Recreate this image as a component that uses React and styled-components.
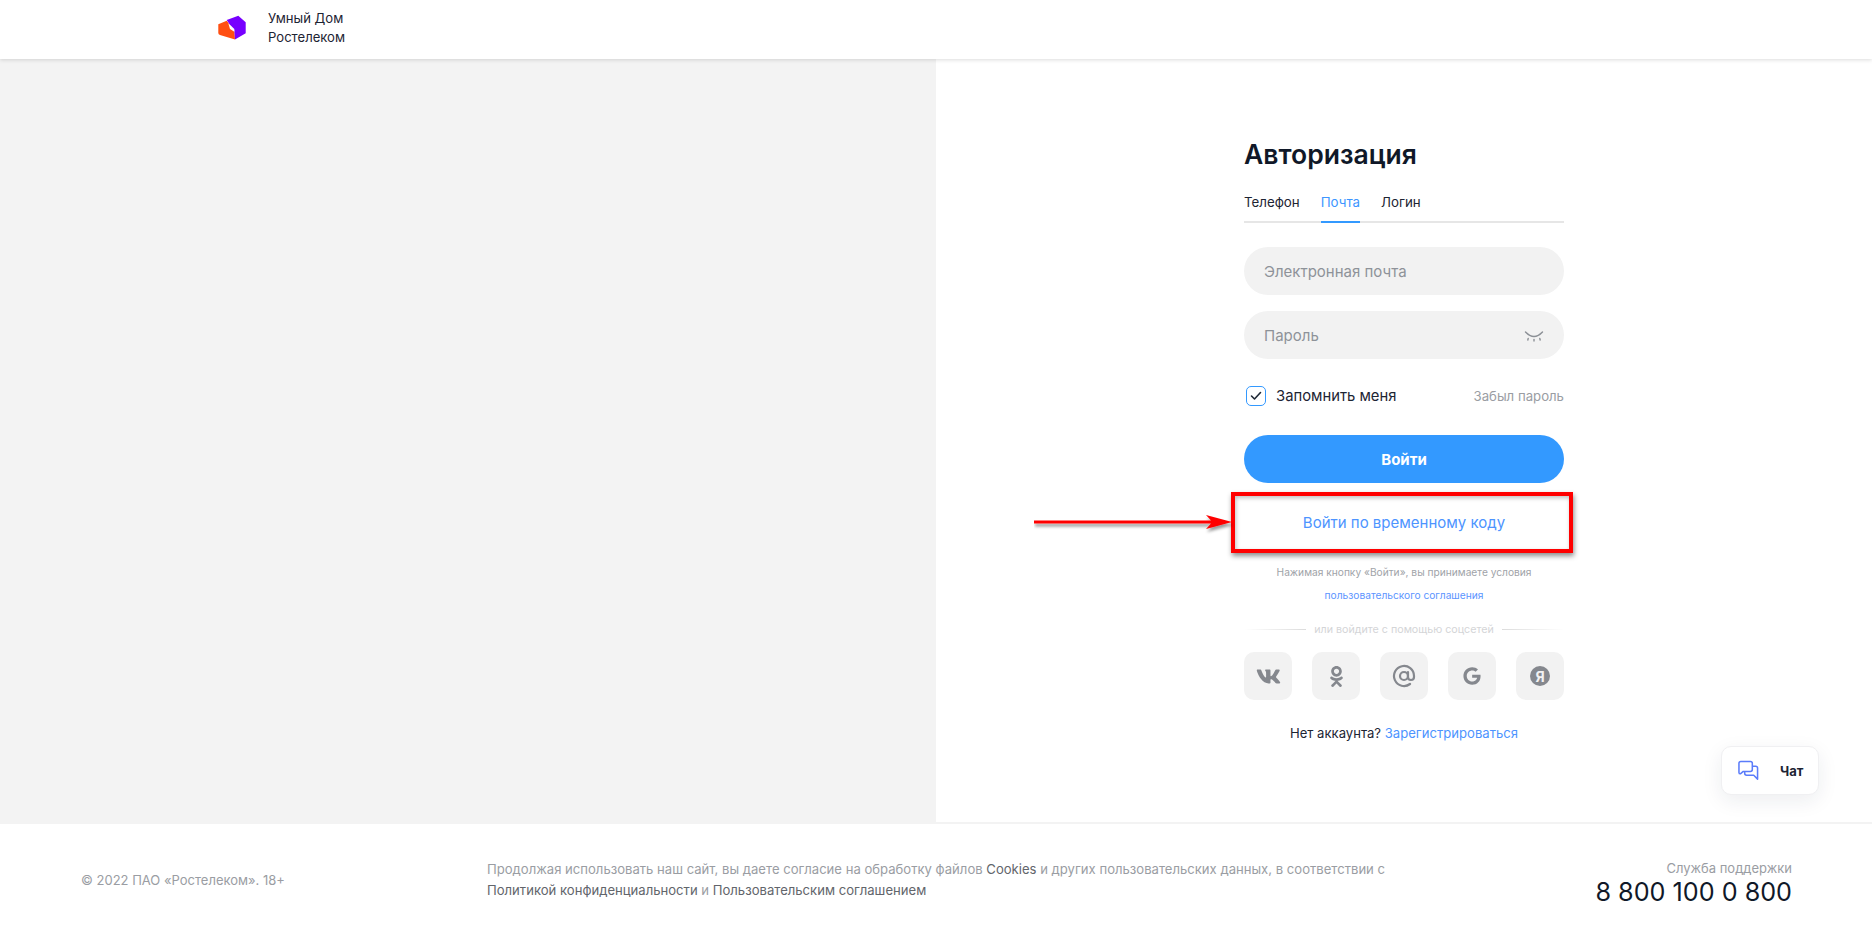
import React from "react";
import styled, { createGlobalStyle } from "styled-components";
import { FaVk, FaOdnoklassniki, FaGoogle } from "react-icons/fa";
import { AtSign } from "lucide-react";

const GlobalStyle = createGlobalStyle`
  html, body { margin: 0; padding: 0; background: #fff; }
  * { box-sizing: border-box; }
  body { font-family: Inter, "Noto Sans", sans-serif; color: #101828; }
`;

const Logo = () => (
  <svg width="28" height="26" viewBox="0 0 28 26">
    <path d="M0.3 9.3 L8.7 5.7 L16.3 15 L17 24.6 L2 20 Q0.3 19.5 0.3 18 Z" fill="#ff4f12" />
    <path d="M8.7 5 L20.3 0.7 L27.7 7.3 V18.3 L17 24.6 L16.3 15 L12 10 Z" fill="#7700ff" />
    <path d="M10.3 8.3 L16.3 14 V16.7 L12 14 Z" fill="#fff" />
  </svg>
);

const EyeClosed = () => (
  <svg width="20" height="14" viewBox="0 0 20 14" fill="none" stroke="#8c9096" strokeWidth="1.4" strokeLinecap="round">
    <path d="M1.5 4 Q10 13 18.5 4" />
    <path d="M4.2 10.5 L3.8 12" />
    <path d="M10 11.5 V13" />
    <path d="M15.8 10.5 L16.2 12" />
  </svg>
);

const Check = () => (
  <svg width="12" height="10" viewBox="0 0 12 10" fill="none" stroke="#1f2937" strokeWidth="1.6" strokeLinecap="round" strokeLinejoin="round">
    <path d="M1.5 5 L4.5 8 L10.5 1.5" />
  </svg>
);

const ChatIcon = () => (
  <svg width="21" height="21" viewBox="0 0 22 22" fill="none" stroke="#5b7cfa" strokeWidth="1.6" strokeLinejoin="round">
    <path d="M3 1.5 H13 Q15 1.5 15 3.5 V10 Q15 12 13 12 H5.5 L2.5 14.5 Q1 14.5 1 13 V3.5 Q1 1.5 3 1.5 Z" />
    <path d="M7 12 V14 Q7 16 9 16 H16.5 L20.5 20 V8.5 Q20.5 6.5 18.5 6.5 H15" />
  </svg>
);

const Arrow = () => (
  <svg width="204" height="28" viewBox="0 0 204 28">
    <defs>
      <filter id="arrowShadow" x="-5%" y="-50%" width="110%" height="220%">
        <feDropShadow dx="1" dy="3" stdDeviation="1.6" floodColor="#000" floodOpacity="0.4" />
      </filter>
    </defs>
    <path d="M0 10.5 H177 L172 5 L198 12 L172 19 L177 13.5 H0 Z" fill="#ff0000" filter="url(#arrowShadow)" />
  </svg>
);

export default function App() {
  return (
    <>
      <GlobalStyle />
      <Page>
        <Header>
          <Brand>
            <Logo />
            <BrandName>
              Умный Дом
              <br />
              Ростелеком
            </BrandName>
          </Brand>
        </Header>
        <Main>
          <LeftPanel />
          <RightPanel>
            <Form>
              <Title>Авторизация</Title>
              <Tabs>
                <Tab>Телефон</Tab>
                <Tab $active>Почта</Tab>
                <Tab>Логин</Tab>
              </Tabs>
              <Fields>
                <Field>
                  <FieldLabel>Электронная почта</FieldLabel>
                </Field>
                <Field>
                  <FieldLabel>Пароль</FieldLabel>
                  <EyeClosed />
                </Field>
              </Fields>
              <OptionsRow>
                <Remember>
                  <CheckBox>
                    <Check />
                  </CheckBox>
                  Запомнить меня
                </Remember>
                <Forgot>Забыл пароль</Forgot>
              </OptionsRow>
              <SubmitButton>Войти</SubmitButton>
              <CodeRow>
                <CodeLink>Войти по временному коду</CodeLink>
                <RedBox />
                <ArrowWrap>
                  <Arrow />
                </ArrowWrap>
              </CodeRow>
              <Terms>Нажимая кнопку «Войти», вы принимаете условия</Terms>
              <TermsLink>пользовательского соглашения</TermsLink>
              <Divider>
                <DividerLine $reverse />
                <span>или войдите с помощью соцсетей</span>
                <DividerLine />
              </Divider>
              <Socials>
                <SocialButton><FaVk size={25} /></SocialButton>
                <SocialButton><FaOdnoklassniki size={21} /></SocialButton>
                <SocialButton><AtSign size={24} strokeWidth={2.2} /></SocialButton>
                <SocialButton><FaGoogle size={18} /></SocialButton>
                <SocialButton><YandexMark>Я</YandexMark></SocialButton>
              </Socials>
              <Signup>
                Нет аккаунта? <a>Зарегистрироваться</a>
              </Signup>
            </Form>
          </RightPanel>
          <ChatWidget>
            <ChatIcon />
            <ChatLabel>Чат</ChatLabel>
          </ChatWidget>
        </Main>
        <Footer>
          <Copyright>© 2022 ПАО «Ростелеком». 18+</Copyright>
          <Legal>
            Продолжая использовать наш сайт, вы даете согласие на обработку файлов <b>Cookies</b> и других
            пользовательских данных, в соответствии с
            <br />
            <b>Политикой конфиденциальности</b> и <b>Пользовательским соглашением</b>
          </Legal>
          <Support>
            <SupportLabel>Служба поддержки</SupportLabel>
            <Phone>8 800 100 0 800</Phone>
          </Support>
        </Footer>
      </Page>
    </>
  );
}

const Page = styled.div`
  height: 936px;
  display: flex;
  flex-direction: column;
  overflow: hidden;
`;

const Header = styled.header`
  height: 59px;
  flex: none;
  background: #fff;
  box-shadow: 0 1px 4px rgba(0, 0, 0, 0.14);
  position: relative;
  z-index: 2;
  display: flex;
  align-items: center;
  padding: 0 0 4px 218px;
`;

const Brand = styled.div`
  display: flex;
  align-items: center;
  gap: 22px;
`;

const BrandName = styled.div`
  font-size: 13.1px;
  line-height: 18.5px;
  color: #1d2433;
`;

const Main = styled.main`
  flex: 1;
  display: flex;
  position: relative;
`;

const LeftPanel = styled.div`
  width: 936px;
  background: #f3f3f3;
`;

const RightPanel = styled.div`
  flex: 1;
  display: flex;
  justify-content: center;
`;

const Form = styled.div`
  width: 320px;
  padding-top: 77px;
  display: flex;
  flex-direction: column;
`;

const Title = styled.h1`
  margin: 0;
  font-size: 26.5px;
  line-height: 36px;
  font-weight: 600;
  color: #101828;
`;

const Tabs = styled.div`
  display: flex;
  gap: 21px;
  margin-top: 20px;
  height: 31px;
  border-bottom: 2px solid #e6e6e6;
`;

const Tab = styled.div`
  font-size: 13.3px;
  line-height: 20px;
  height: 31px;
  color: ${(p) => (p.$active ? "#3d96ff" : "#1d2433")};
  border-bottom: 2px solid ${(p) => (p.$active ? "#3399ff" : "transparent")};
`;

const Fields = styled.div`
  margin-top: 24px;
  display: flex;
  flex-direction: column;
  gap: 16px;
`;

const Field = styled.div`
  height: 48px;
  border-radius: 24px;
  background: #f2f2f2;
  padding: 0 20px;
  display: flex;
  align-items: center;
  justify-content: space-between;
`;

const FieldLabel = styled.span`
  font-size: 15px;
  color: #8e9299;
`;

const OptionsRow = styled.div`
  display: flex;
  align-items: center;
  justify-content: space-between;
  margin-top: 26px;
  height: 22px;
`;

const Remember = styled.div`
  display: flex;
  align-items: center;
  gap: 10px;
  font-size: 14.8px;
  color: #1d2433;
  padding-left: 2px;
`;

const CheckBox = styled.div`
  width: 20px;
  height: 20px;
  border: 1.5px solid #3399ff;
  border-radius: 5px;
  display: flex;
  align-items: center;
  justify-content: center;
`;

const Forgot = styled.div`
  font-size: 13.2px;
  color: #9a9da3;
`;

const SubmitButton = styled.button`
  margin-top: 28px;
  height: 48px;
  border: none;
  border-radius: 24px;
  background: #3399ff;
  color: #fff;
  font-family: inherit;
  font-size: 15px;
  font-weight: 700;
`;

const CodeRow = styled.div`
  position: relative;
  height: 61px;
  margin-top: 9px;
  display: flex;
  align-items: center;
  justify-content: center;
`;

const CodeLink = styled.a`
  font-size: 15px;
  color: #4d94ff;
`;

const RedBox = styled.div`
  position: absolute;
  left: -13px;
  right: -9px;
  top: 0;
  bottom: 0;
  border: 4px solid #ff0000;
  box-shadow: 1px 3px 5px rgba(0, 0, 0, 0.45), inset 1px 2px 4px rgba(0, 0, 0, 0.25);
`;

const ArrowWrap = styled.div`
  position: absolute;
  left: -210px;
  top: 18px;
  line-height: 0;
`;

const Terms = styled.div`
  margin-top: 11px;
  text-align: center;
  font-size: 10.2px;
  line-height: 16px;
  color: #a0a3a8;
`;

const TermsLink = styled.a`
  margin-top: 7px;
  text-align: center;
  font-size: 10.2px;
  line-height: 16px;
  color: #5b94ff;
`;

const Divider = styled.div`
  margin-top: 18px;
  height: 16px;
  display: flex;
  align-items: center;
  gap: 8px;
  font-size: 10.7px;
  color: #d4d5d7;
  white-space: nowrap;
`;

const DividerLine = styled.div`
  flex: 1;
  height: 1px;
  background: linear-gradient(
    ${(p) => (p.$reverse ? "to right" : "to left")},
    rgba(220, 220, 220, 0),
    #dcdcdc
  );
`;

const Socials = styled.div`
  margin-top: 15px;
  display: flex;
  justify-content: space-between;
`;

const SocialButton = styled.div`
  width: 48px;
  height: 48px;
  border-radius: 10px;
  background: #f2f2f2;
  color: #85888e;
  display: flex;
  align-items: center;
  justify-content: center;
`;

const YandexMark = styled.span`
  width: 20px;
  height: 20px;
  border-radius: 50%;
  background: #85888e;
  color: #f2f2f2;
  font-size: 14px;
  font-weight: 700;
  display: flex;
  align-items: center;
  justify-content: center;
`;

const Signup = styled.div`
  margin-top: 24px;
  text-align: center;
  font-size: 13.1px;
  line-height: 18px;
  color: #1d2433;
  a {
    color: #4d94ff;
  }
`;

const ChatWidget = styled.div`
  position: absolute;
  left: 1721px;
  top: 687px;
  width: 98px;
  height: 49px;
  background: #fff;
  border: 1px solid #f0f0f2;
  border-radius: 10px;
  box-shadow: 0 6px 20px rgba(30, 40, 70, 0.08);
  display: flex;
  align-items: center;
  padding-left: 16px;
  gap: 21px;
`;

const ChatLabel = styled.span`
  font-size: 13px;
  font-weight: 700;
  color: #1d2433;
`;

const Footer = styled.footer`
  height: 114px;
  flex: none;
  background: #fff;
  border-top: 2px solid #f3f3f3;
  display: flex;
  align-items: center;
  padding: 0 80px 0 81px;
`;

const Copyright = styled.div`
  width: 406px;
  font-size: 13px;
  color: #9a9da3;
`;

const Legal = styled.div`
  flex: 1;
  font-size: 13.1px;
  line-height: 21px;
  color: #9a9da3;
  b {
    font-weight: 400;
    color: #62656b;
  }
`;

const Support = styled.div`
  text-align: right;
  padding-top: 5px;
`;

const SupportLabel = styled.div`
  font-size: 13px;
  line-height: 18px;
  color: #9a9da3;
`;

const Phone = styled.div`
  font-size: 25.2px;
  line-height: 30px;
  color: #101828;
`;
